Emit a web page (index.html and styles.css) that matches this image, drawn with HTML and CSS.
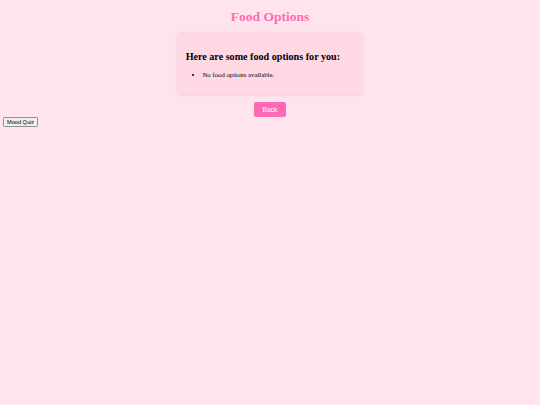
FILE: index.html
```html
<!DOCTYPE html>
<html>
<head>
<meta charset="utf-8">
<title>Food Options</title>
<link rel="stylesheet" href="styles.css">
</head>
<body>
<h1 class="title">Food Options</h1>
<div class="card">
  <h2 class="card-title">Here are some food options for you:</h2>
  <ul class="food-list">
    <li>No food options available.</li>
  </ul>
</div>
<div class="actions">
  <button class="back-btn">Back</button>
</div>
<button class="quiz-btn">Mood Quiz</button>
</body>
</html>
```
FILE: styles.css
```css
html {
  background: #ffe4ee;
}
body {
  margin: 3.375px;
  background: #ffe4ee;
  font-family: "Liberation Serif", "Times New Roman", serif;
  font-size: 6.75px;
  color: #000;
}
.title {
  font-size: 13.5px;
  margin: 6px 0 8px;
  text-align: center;
  color: #ff69b4;
  font-weight: bold;
}
.card {
  width: 168.75px;
  padding: 8.44px 8.44px 9.44px;
  margin: 0 auto;
  background: #ffd8e3;
  border-radius: 4.2px;
  box-shadow: 0 0.8px 2.5px rgba(0, 0, 0, 0.1);
}
.card-title {
  font-size: 10.125px;
  margin: 9.4px 0 8.4px;
  font-weight: bold;
}
.food-list {
  margin: 6.75px 0;
  padding-left: 16.875px;
  font-size: 6.75px;
}
.actions {
  text-align: center;
  margin-top: 8.44px;
}
.back-btn {
  background: #ff69b4;
  color: #fff;
  border: none;
  border-radius: 2.1px;
  padding: 3.375px 8.44px;
  font-family: "Liberation Sans", Arial, sans-serif;
  font-size: 6.75px;
  line-height: 1.15;
  cursor: pointer;
  vertical-align: top;
}
.quiz-btn {
  display: block;
  font-family: "Liberation Sans", Arial, sans-serif;
  font-size: 5.625px;
  line-height: 1.15;
  padding: 1px 2.6px;
  border: 1px solid #8f8f8f;
  border-radius: 1.3px;
  background: #efefef;
  color: #000;
  margin: 0;
}
```
